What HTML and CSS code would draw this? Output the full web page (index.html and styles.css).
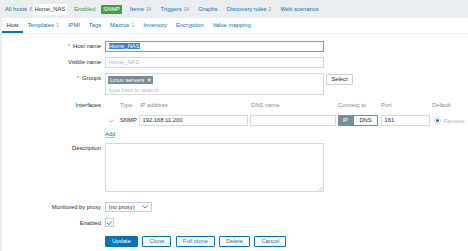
FILE: index.html
```html
<!DOCTYPE html>
<html>
<head>
<meta charset="utf-8">
<title>Host</title>
<link rel="stylesheet" href="styles.css">
</head>
<body>
<div class="topbar">
  <a class="crumb">All hosts</a><span class="sep">/</span><span class="crumb-cur">Home_NAS</span>
  <span class="status">Enabled</span><span class="badge">SNMP</span>
  <a class="nav first">Items<span class="cnt">14</span></a>
  <a class="nav">Triggers<span class="cnt">14</span></a>
  <a class="nav">Graphs</a>
  <a class="nav">Discovery rules<span class="cnt">2</span></a>
  <a class="nav">Web scenarios</a>
</div>
<div class="page">
  <div class="tabs">
    <span class="tab active">Host</span>
    <span class="tab">Templates<span class="cnt">1</span></span>
    <span class="tab">IPMI</span>
    <span class="tab">Tags</span>
    <span class="tab">Macros<span class="cnt">1</span></span>
    <span class="tab">Inventory</span>
    <span class="tab">Encryption</span>
    <span class="tab">Value mapping</span>
  </div>
  <div class="form">
    <div class="label"><span class="req">*</span> Host name</div>
    <div class="field"><div class="inp focus"><span class="sel">Home_NAS</span></div></div>

    <div class="label">Visible name</div>
    <div class="field"><div class="inp ph">Home_NAS</div></div>

    <div class="label"><span class="req">*</span> Groups</div>
    <div class="field groups">
      <div class="multi">
        <span class="chip">Linux servers <b class="x">✕</b></span>
        <div class="ph search">type here to search</div>
      </div>
      <span class="btn-grey">Select</span>
    </div>

    <div class="label lbl-if">Interfaces</div>
    <div class="field">
      <div class="iface">
        <div class="ih"></div>
        <div class="ih">Type</div>
        <div class="ih">IP address</div>
        <div class="ih">DNS name</div>
        <div class="ih">Connect to</div>
        <div class="ih">Port</div>
        <div class="ih">Default</div>

        <div class="chev"><svg width="6" height="4" viewBox="0 0 6 4"><polyline points="0.5,0.5 3,3 5.5,0.5" fill="none" stroke="#9aa9b0" stroke-width="0.8"/></svg></div>
        <div class="itype">SNMP</div>
        <div><div class="inp ipin">192.168.11.200</div></div>
        <div><div class="inp dnsin"></div></div>
        <div class="toggle"><span class="tg on">IP</span><span class="tg">DNS</span></div>
        <div><div class="inp portin">161</div></div>
        <div class="def"><span class="radio"><span class="dot"></span></span><span class="remove">Remove</span></div>
      </div>
      <a class="add">Add</a>
    </div>

    <div class="label">Description</div>
    <div class="field">
      <div class="textarea">
        <svg class="grip" width="5" height="5" viewBox="0 0 5 5"><line x1="4.5" y1="0.5" x2="0.5" y2="4.5" stroke="#9aa9b0" stroke-width="0.6"/><line x1="4.5" y1="2.5" x2="2.5" y2="4.5" stroke="#9aa9b0" stroke-width="0.6"/></svg>
      </div>
    </div>

    <div class="label gap-top">Monitored by proxy</div>
    <div class="field gap-top">
      <div class="select"><span>(no proxy)</span><svg width="6" height="4" viewBox="0 0 6 4"><polyline points="0.5,0.5 3,3 5.5,0.5" fill="none" stroke="#4f5f67" stroke-width="0.8"/></svg></div>
    </div>

    <div class="label lbl-en">Enabled</div>
    <div class="field">
      <div class="check"><svg width="7" height="6" viewBox="0 0 7 6"><polyline points="1,3 2.8,4.8 6,1.2" fill="none" stroke="#0275b8" stroke-width="0.9"/></svg></div>
    </div>

    <div class="label btn-top"></div>
    <div class="field buttons btn-top">
      <span class="btn primary">Update</span>
      <span class="btn">Clone</span>
      <span class="btn">Full clone</span>
      <span class="btn">Delete</span>
      <span class="btn">Cancel</span>
    </div>
  </div>
</div>
</body>
</html>
```

FILE: styles.css
```css
html, body {
  margin: 0;
  padding: 0;
}
body {
  background: #ebeef0;
  font-family: "Liberation Sans", Arial, sans-serif;
  font-size: 5.8px;
  color: #1f2c33;
  width: 468px;
  height: 251px;
  overflow: hidden;
}
a { color: #0275b8; text-decoration: none; }

.topbar {
  height: 18px;
  display: flex;
  align-items: center;
  padding-left: 5px;
  white-space: nowrap;
}
.sep { margin: 0 1px 0 3px; color: #1f2c33; }
.crumb-cur {
  background: #fff;
  padding: 0 2px;
  height: 11px;
  line-height: 11px;
}
.status { margin-left: 7px; color: #429e47; }
.badge {
  margin-left: 6px;
  background: #429e47;
  color: #fff;
  height: 9px;
  line-height: 9px;
  padding: 0 1.8px;
  border-radius: 1px;
}
.nav { margin-left: 9.5px; }
.nav.first { margin-left: 8px; }
.cnt { color: #768d99; font-size: 4.6px; margin-left: 2px; }

.page {
  margin-left: 2px;
  background: #fff;
  height: 233px;
}
.tabs {
  display: flex;
  height: 15px;
  border-bottom: 1px solid #ebeef0;
  white-space: nowrap;
}
.tab {
  padding: 0 4.5px;
  height: 13px;
  line-height: 14px;
  border-bottom: 2px solid transparent;
  color: #0275b8;
}
.tab.active {
  color: #1f2c33;
  border-bottom-color: #0275b8;
}
.tab .cnt { margin-left: 2.5px; }

.form {
  display: grid;
  grid-template-columns: 99px 219px;
  column-gap: 4px;
  row-gap: 5px;
  padding-top: 7px;
}
.label {
  text-align: right;
  line-height: 11px;
  white-space: nowrap;
}
.req { color: #e45959; margin-right: 1px; }
.lbl-if { line-height: 10px; }
.lbl-en { line-height: 10px; }
.gap-top { margin-top: 5px; }
.btn-top { margin-top: 3px; }

.inp {
  box-sizing: border-box;
  height: 11px;
  border: 1px solid #d2dadd;
  background: #fff;
  line-height: 9px;
  padding-left: 2.5px;
  white-space: nowrap;
  overflow: hidden;
}
.inp.focus { border-color: #5aa6d6; }
.sel { background: #3b7edb; color: #fff; padding: 0 0.5px; }
.ph { color: #acbbc2; }

.groups {
  display: flex;
  align-items: flex-start;
  width: 250px;
}
.multi {
  box-sizing: border-box;
  width: 219px;
  height: 22px;
  border: 1px solid #d2dadd;
  padding: 2px 2px 0 2px;
  flex: none;
}
.chip {
  display: inline-block;
  background: #768d99;
  color: #fff;
  height: 8px;
  line-height: 8px;
  padding: 0 2px 0 2px;
  border-radius: 1px;
  white-space: nowrap;
}
.chip .x { font-size: 5px; margin-left: 1px; }
.search { line-height: 10px; margin-top: 1px; padding-left: 1px; }
.btn-grey {
  box-sizing: border-box;
  margin-left: 2px;
  margin-top: 1px;
  width: 27px;
  height: 11px;
  line-height: 9px;
  text-align: center;
  border: 1px solid #c5cfd4;
  border-radius: 1px;
  background: #fafbfb;
  color: #1f2c33;
}

.iface {
  display: grid;
  grid-template-columns: 15px 19px 111px 88px 43px 51px 36px;
  grid-template-rows: 10px 11px;
  row-gap: 5px;
  width: 363px;
}
.ih {
  color: #768d99;
  line-height: 10px;
  white-space: nowrap;
}
.ih:nth-child(3), .ih:nth-child(4) { padding-left: 1px; }
.chev {
  display: flex;
  align-items: center;
  padding-left: 3px;
}
.itype { line-height: 11px; color: #1f2c33; }
.ipin { width: 109px; }
.dnsin { width: 86px; }
.portin { width: 49px; }
.toggle { display: flex; width: 40px; }
.tg {
  box-sizing: border-box;
  height: 11px;
  line-height: 9px;
  text-align: center;
  border: 1px solid #768d99;
  color: #1f2c33;
  width: 25px;
}
.tg.on {
  width: 15px;
  background: #768d99;
  color: #fff;
}
.def {
  display: flex;
  align-items: center;
  padding-left: 2px;
}
.radio {
  box-sizing: border-box;
  width: 7px;
  height: 7px;
  border-radius: 50%;
  border: 1px solid #c5cfd4;
  display: flex;
  align-items: center;
  justify-content: center;
}
.dot { width: 3px; height: 3px; border-radius: 50%; background: #0275b8; }
.remove { margin-left: 2.5px; color: #acbbc2; }
.add {
  display: inline-block;
  margin-top: 4px;
  line-height: 8px;
  text-decoration: underline;
  text-decoration-color: #9cc6e0;
}

.textarea {
  box-sizing: border-box;
  width: 219px;
  height: 49px;
  border: 1px solid #d2dadd;
  position: relative;
}
.grip { position: absolute; right: 0; bottom: 0; }

.select {
  box-sizing: border-box;
  width: 47px;
  height: 10px;
  border: 1px solid #c5cfd4;
  display: flex;
  align-items: center;
  justify-content: space-between;
  padding: 0 3px 0 2.5px;
  white-space: nowrap;
}
.check {
  box-sizing: border-box;
  width: 9px;
  height: 9px;
  border: 1px solid #c5cfd4;
  display: flex;
  align-items: center;
  justify-content: center;
}

.buttons {
  display: flex;
  gap: 4.5px;
  width: 300px;
}
.btn {
  box-sizing: border-box;
  height: 11px;
  line-height: 9px;
  padding: 0 6px;
  border: 1px solid #0275b8;
  border-radius: 1px;
  color: #0275b8;
  background: #fff;
  white-space: nowrap;
}
.btn.primary {
  background: #0275b8;
  color: #fff;
}
```
